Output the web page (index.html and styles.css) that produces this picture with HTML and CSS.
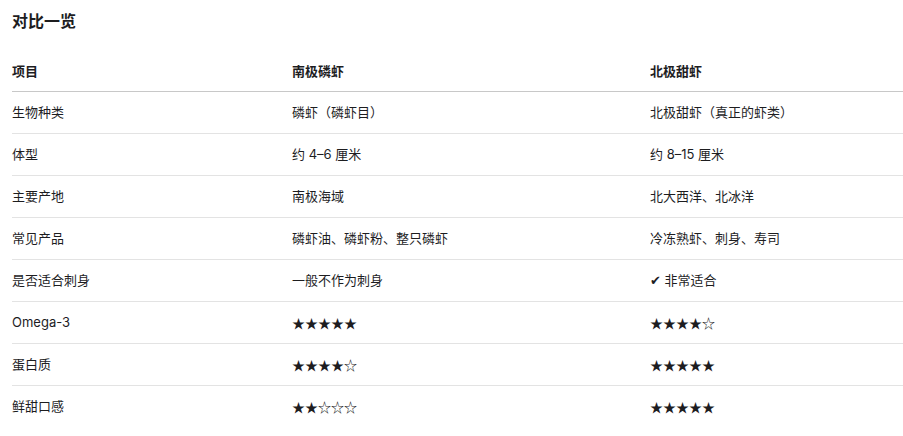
FILE: index.html
```html
<!DOCTYPE html>
<html lang="zh-CN">
<head>
<meta charset="utf-8">
<title>对比一览</title>
<link rel="stylesheet" href="styles.css">
</head>
<body>
<section class="compare">
  <h2 class="title">对比一览</h2>
  <table class="table">
    <colgroup>
      <col class="c1"><col class="c2"><col class="c3">
    </colgroup>
    <thead>
      <tr><th>项目</th><th>南极磷虾</th><th>北极甜虾</th></tr>
    </thead>
    <tbody>
      <tr><td>生物种类</td><td>磷虾（磷虾目）</td><td>北极甜虾（真正的虾类）</td></tr>
      <tr><td>体型</td><td>约 4–6 厘米</td><td>约 8–15 厘米</td></tr>
      <tr><td>主要产地</td><td>南极海域</td><td>北大西洋、北冰洋</td></tr>
      <tr><td>常见产品</td><td>磷虾油、磷虾粉、整只磷虾</td><td>冷冻熟虾、刺身、寿司</td></tr>
      <tr><td>是否适合刺身</td><td>一般不作为刺身</td><td><span class="check">✔</span> 非常适合</td></tr>
      <tr><td>Omega-3</td><td class="stars">★★★★★</td><td class="stars">★★★★☆</td></tr>
      <tr><td>蛋白质</td><td class="stars">★★★★☆</td><td class="stars">★★★★★</td></tr>
      <tr><td>鲜甜口感</td><td class="stars">★★☆☆☆</td><td class="stars">★★★★★</td></tr>
    </tbody>
  </table>
</section>
</body>
</html>
```
FILE: styles.css
```css
html, body {
  margin: 0;
  padding: 0;
  background: #ffffff;
}
body {
  font-family: Inter, "Noto Sans CJK SC", sans-serif;
  color: #1d1d1f;
  font-size: 13px;
}
.compare {
  padding: 10px 0 0 12px;
}
.title {
  margin: 0 0 18px 0;
  font-size: 16px;
  line-height: 22px;
  font-weight: 700;
}
.table {
  width: 100%;
  border-collapse: collapse;
  table-layout: fixed;
}
.c1 { width: 280px; }
.c2 { width: 358px; }
.table th,
.table td {
  text-align: left;
  padding: 12px 0;
  line-height: 17px;
  font-weight: 400;
  white-space: nowrap;
}
.table th {
  font-weight: 700;
  padding-top: 13px;
  padding-bottom: 11px;
  border-bottom: 1px solid #c8c8c8;
}
.table tbody tr td {
  border-bottom: 1px solid #e3e3e3;
}
.table tbody tr:last-child td {
  border-bottom: none;
}
.table td.stars {
  font-family: "Noto Sans CJK SC", sans-serif;
  font-size: 13px;
  letter-spacing: 0;
}
.check {
  font-family: "DejaVu Sans", sans-serif;
  font-size: 13px;
}
```
